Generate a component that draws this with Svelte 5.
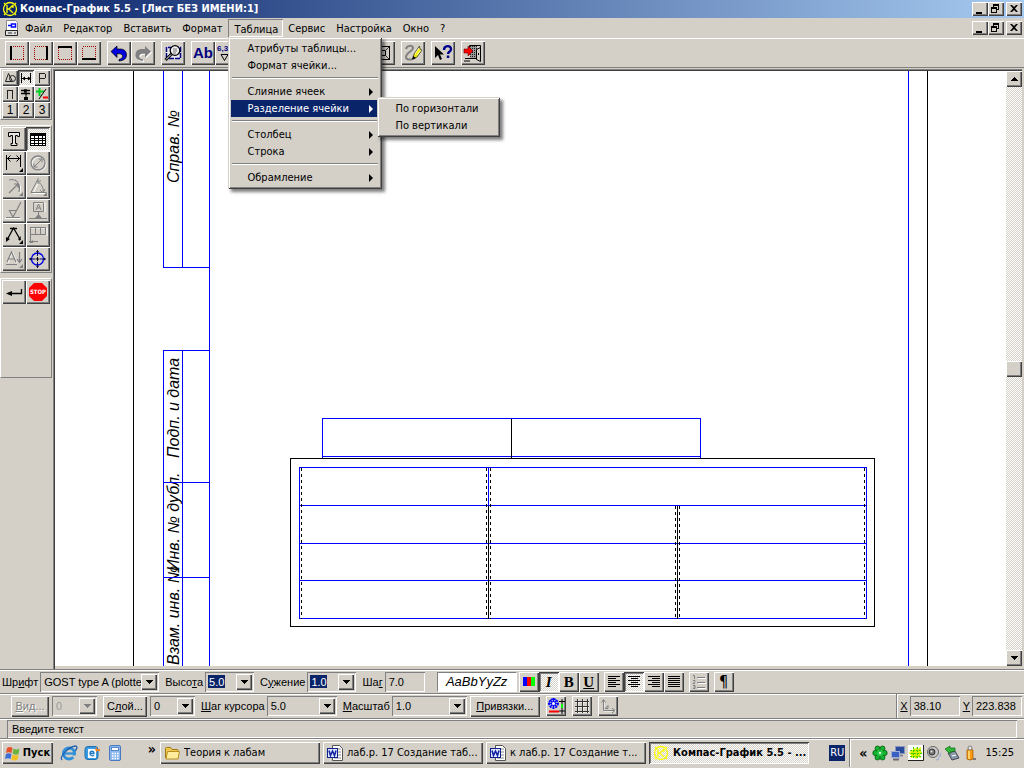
<script>
  const svg = (size, body) =>
    `<svg width="${size}" height="${size}" viewBox="0 0 ${size} ${size}" fill="none" stroke-width="1" aria-hidden="true">${body}</svg>`;

  const frame = (edge) =>
    `<rect x="5.5" y="5.5" width="13" height="13" stroke="#a00000" stroke-dasharray="1 1" shape-rendering="crispEdges"/><path d="${edge}" stroke="#000" stroke-width="2" shape-rendering="crispEdges"/>`;

  const icons = {
    edgeLeft: svg(24, frame('M6 5v14')),
    edgeRight: svg(24, frame('M18 5v14')),
    edgeTop: svg(24, frame('M5 6h14')),
    edgeBottom: svg(24, frame('M5 18h14')),
    undo: svg(24, `<path d="M4 10.500l6-5.500v3h3c4 0 6.500 2 6.500 6 0 3.500-2.500 5.500-7.500 6v-1.500c3-1 4-2 3.500-4-.4-1.500-2-2-5.500-1.800v3.800z" fill="#0000e0" stroke="#000" stroke-width=".7"/>`),
    redo: svg(24, `<path d="M21 11.500l-6-5.500v3h-3c-4 0-6.500 2-6.500 6 0 3.500 2.500 5.500 7.500 6v-1.500c-3-1-4-2-3.500-4 .4-1.500 2-2 5.500-1.800v3.800z" fill="#fff"/><path d="M20 10.500l-6-5.500v3h-3c-4 0-6.500 2-6.500 6 0 3.500 2.500 5.500 7.500 6v-1.500c-3-1-4-2-3.500-4 .4-1.500 2-2 5.500-1.800v3.800z" fill="#808080"/>`),
    magnify: svg(24, `<path d="M5 6h14v12H5z" fill="#e8e8e8"/><path d="M5.500 6v12M7 6.500h13M19.500 6v12M8 17.500h12" stroke="#00008b" stroke-dasharray="5 1" stroke-width="1.500"/><circle cx="14" cy="9.500" r="4.800" fill="#eee" stroke="#000" stroke-width="1.300"/><path d="M12 8h4M12 10h4M12 12h3" stroke="#777"/><path d="M10.500 13l-6 6" stroke="#000" stroke-width="3"/><path d="M10 13.500l-5 5" stroke="#fff" stroke-width="1"/>`),
    rough: svg(24, `<path d="M6 13.500h7l-3.500 6z" stroke="#000"/>`),
    grid: svg(24, `<path d="M5.500 5.500h13v13h-13zM5 10h14M5 14h14M10 5v14M14 5v14" stroke="#333"/>`),
    box3d: svg(24, `<rect x="5.500" y="5.500" width="13" height="13" stroke="#000"/><rect x="9.500" y="9.500" width="5" height="5" stroke="#000"/><path d="M6 6l4 4M18 6l-4 4M6 18l4-4M18 18l-4-4" stroke="#333"/>`),
    pencil: svg(24, `<path d="M5 8c1-4 7-4 7-1 0 3-7 5-7 9 0 3 4 3 6 2" stroke="#808080" stroke-width="2"/><path d="M12 18l1-5 5.500-8 .5 3 2 1-5 7z" fill="#f0f000" stroke="#333" stroke-width=".8"/><path d="M14 13l4-6M16 14l4-5" stroke="#fff" stroke-width=".7"/><path d="M11 19l1-4 3 2z" fill="#000"/>`),
    help: svg(24, `<path d="M4 5v12l3-3 2 5 2-1-2-4.500h4z" fill="#000"/><path d="M13 9c0-5 7-5 7-1 0 3-3 2.500-3 5" stroke="#00008b" stroke-width="2.400"/><path d="M15.800 14.500h2.500V17h-2.500z" fill="#00008b"/>`),
    door: svg(24, `<path d="M8.500 8V4.500h11v3" stroke="#000"/><path d="M9 5h7v13H9z" fill="#999"/><path d="M9.500 5v13M11.500 5v13M13.500 5v13M15.500 5v13" stroke="#222" stroke-dasharray="1 1"/><path d="M15.500 8.500l4-2v14l-4-2z" fill="#d4d0c8" stroke="#000"/><path d="M3 8h4V5l5 5-5 5v-3H3z" fill="#f00" stroke="#600" stroke-width=".6"/><path d="M4 17.500h11M3 20h6M17.500 12v2" stroke="#000"/>`),

    t16a: svg(16, `<path d="M3.500 11.500l3-8 4 8z" stroke="#222"/><circle cx="10.500" cy="8.500" r="3" stroke="#222"/>`),
    t16b: svg(16, `<path d="M3.500 3v10M12.500 3v10M4 8.500h9" stroke="#000" shape-rendering="crispEdges"/><path d="M4 8.500l3-2v4zM13 8.500l-3-2v4z" fill="#000"/>`),
    t16p: svg(16, `<path d="M5.500 13V3.500h4q2 0 2 2.500t-2 2.500h-4" stroke="#222" shape-rendering="crispEdges"/>`),
    t16n: svg(16, `<path d="M5.500 13V4.500h5V13" stroke="#222" shape-rendering="crispEdges"/>`),
    t16tap: svg(16, `<path d="M3 4.500h9M3 7.500h9M8 3v6" stroke="#000" stroke-width="1.300"/><path d="M6 3l3 2-3 2z" fill="#000"/><path d="M6 11h4v3H6z" fill="#000"/><path d="M8 9v3" stroke="#000"/>`),
    t16pm: svg(16, `<path d="M5.500 2v8M2 5.500h8" stroke="#00d020" stroke-width="2"/><path d="M12 3L5 13" stroke="#000"/><path d="M9 11.500h5" stroke="#f00" stroke-width="2"/>`),

    text: svg(24, `<path d="M6.500 5.500h11v4h-2v-1h-2v8h1.500v2h-6v-2H10.500v-8h-2v1h-2z" stroke="#000" fill="#e8e6e0"/>`),
    table: svg(24, `<rect x="4.500" y="6.500" width="15" height="12" fill="#fff" stroke="#000"/><path d="M4 7.500h16" stroke="#000" stroke-width="3"/><path d="M5 11.500h14M5 13.500h14M5 16.500h14M8.500 9v9M12.500 9v9M16.500 9v9" stroke="#000" shape-rendering="crispEdges"/>`),
    dim: svg(24, `<path d="M4.500 4v15M18.500 4v12M5 7.500h13" stroke="#000" shape-rendering="crispEdges"/><path d="M8.500 4.500l-3 3 3 3M14.500 4.500l3 3-3 3" stroke="#000"/><path d="M21 17v4h-4z" fill="#000"/>`),
    diam: svg(24, `<circle cx="13" cy="13" r="7" stroke="#fff"/><circle cx="12" cy="12" r="7" stroke="#808080" stroke-width="1.300"/><path d="M8 16l8-8M8 12.500V16h3.500M12.500 8H16v3.500" stroke="#808080"/>`),
    radius: svg(24, `<path d="M8 5c8-1 12 4 10 13" stroke="#fff"/><path d="M7 5c8-2 12 4 10 12M7 18l9-9M12 9h4v4" stroke="#808080" stroke-width="1.200"/><path d="M21 17v4h-4z" fill="#808080"/>`),
    angle: svg(24, `<path d="M13 6L7 18.500h13" stroke="#fff"/><path d="M12.500 3L5 17.500h15M11 6c4 2 7 7 6 12M12 9V6h3M14 15l3 3 2-4" stroke="#808080"/><path d="M21 17v4h-4z" fill="#808080"/>`),
    roughness: svg(24, `<path d="M3 19.500h16" stroke="#fff"/><path d="M4 18.500h14M7 11.500h7M7 11l4 7 8-15" stroke="#808080" stroke-width="1.200"/>`),
    base: svg(24, `<path d="M9 4h10v9" stroke="#fff"/><path d="M7.500 3.500h10v9h-10zM12.500 13v6M3 19.500h18" stroke="#808080"/><path d="M10 11l2.500-6 2.500 6M11 9h3" stroke="#808080"/><path d="M9 19l3.500-4 3.500 4z" fill="#808080"/>`),
    leader: svg(24, `<path d="M8 5.500h7M5 17l6.500-12 7 12" stroke="#000" stroke-width="1.300"/><path d="M4 19v-5l4 2zM18 18l-2-2 3-3z" fill="#000"/><path d="M21 17v4h-4z" fill="#000"/>`),
    tol: svg(24, `<path d="M5 5h16v8" stroke="#fff"/><path d="M4.500 4.500h15v7h-15zM9.500 5v6M14.500 5v6M4.500 12v7M3 18.500h9" stroke="#808080" shape-rendering="crispEdges"/><path d="M3 20l4-3v3z" fill="#808080"/>`),
    sort: svg(24, `<path d="M6 16l4.500-11L15 16" stroke="#fff"/><path d="M5 15L9.500 5 14 15M7 12h5M17.500 5v10M15 12l2.500 3.500L20 12M4 17.500h11" stroke="#808080" stroke-width="1.200"/><path d="M21 17v4h-4z" fill="#808080"/>`),
    target: svg(24, `<circle cx="11.500" cy="12" r="6" stroke="#0000e0" stroke-width="1.300"/><path d="M11.500 3v6M11.500 15v6M3 12h6M14 12h6" stroke="#000080"/><path d="M9.500 12h4M11.500 10v4" stroke="#000"/><path d="M10 4h3l-1.500 2zM10 20h3l-1.500-2zM4 10.500v3l2-1.500zM19 10.500v3l-2-1.500z" fill="#111"/>`),
    enter: svg(24, `<path d="M19.500 9v4.500H6" stroke="#000" stroke-width="1.300"/><path d="M4 13.500l6-2.500v5z" fill="#000"/>`),
    stop: svg(24, `<path d="M8 3h8l5 5v8l-5 5H8l-5-5V8z" fill="#f00"/><text x="12" y="14" font-family="DejaVu Sans Condensed, sans-serif" font-size="6" font-weight="bold" fill="#fff" text-anchor="middle">STOP</text>`),

    colors: svg(20, `<path d="M4 5h4v9H4z" fill="#00f"/><path d="M8 5h4v9H8z" fill="#f00"/><path d="M12 5h4v9h-4z" fill="#0f0"/>`),
    left: svg(20, `<path d="M4 4.500h12M4 6.500h8M4 8.500h12M4 10.500h8M4 12.500h12M4 14.500h8" stroke="#000"/>`),
    center: svg(20, `<path d="M4 4.500h12M7 6.500h7M4 8.500h12M7 10.500h7M4 12.500h12M7 14.500h7" stroke="#000"/>`),
    right: svg(20, `<path d="M4 4.500h12M8 6.500h8M4 8.500h12M8 10.500h8M4 12.500h12M8 14.500h8" stroke="#000"/>`),
    justify: svg(20, `<path d="M4 4.500h12M4 6.500h12M4 8.500h12M4 10.500h12M4 12.500h12M4 14.500h12" stroke="#000"/>`),
    list: svg(20, `<path d="M9 6.500h8M9 11.500h8M9 16.500h8" stroke="#fff"/><path d="M8 5.500h8M8 10.500h8M8 15.500h8" stroke="#808080"/><path d="M4 3.500h1.500V7M4 8.500h2v1l-2 2h2M4 13.500h2v3H4M4.500 15H6" stroke="#808080"/>`),
    snap: svg(20, `<path d="M7.500 2v11M2 7.500h11M4 4l7 7M11 4l-7 7" stroke="#00f" stroke-width="1.500"/><circle cx="7.500" cy="7.500" r="4.500" stroke="#00f" stroke-width="1.500" stroke-dasharray="2 1"/><circle cx="7.500" cy="7.500" r="1.500" fill="#fff"/><path d="M16 3v5M13 5.500h6M16 12v6M13 15h6" stroke="#000"/><path d="M16 8v4" stroke="#0f0" stroke-width="2"/><path d="M3 15.500h10" stroke="#f00" stroke-width="2"/>`),
    mesh: svg(20, `<path d="M6 3v14M11 3v14M16 3v14M3 6h14M3 11h14M3 16h14" stroke="#fff"/><path d="M5.500 3v14M10.500 3v14M15.500 3v14M3 5.500h14M3 10.500h14M3 15.500h14" stroke="#333"/>`),
    axes: svg(20, `<path d="M6 4v11h12" stroke="#fff"/><path d="M5.500 4v10.500H17M3.500 6.500l2-3 2 3M14 12l3 2.500-3 2.500M10 9.500l-3 3h3z" stroke="#808080"/>`),

    app: svg(16, `<circle cx="8" cy="8" r="6.500" stroke="#ff0" stroke-width="1.300"/><path d="M5 4v8M5 8h2l4-4M7 8l4 4M11 4v3M2 2l2 2M14 2l-2 2M2 14l2-2M14 14l-2-2" stroke="#ff0" stroke-width="1.300"/>`),
    doc: svg(16, `<path d="M2.500 .5h9l2 2v9h-11z" fill="#fff" stroke="#888"/><path d="M1.500 10.500h12v5h-12z" fill="#ddd" stroke="#222"/><path d="M4 5.500h3M7.500 4v3h4v-3z" stroke="#00f" stroke-width="1.500"/><path d="M4 13h4M10 13h2" stroke="#333"/>`),
    windows: svg(16, `<path d="M2 3q3-2 5.500 0L6.500 8q-3-1.500-5.500 0z" fill="#e8502a"/><path d="M8.500 3.500q3 1.800 6 0L13.500 9q-3 1.500-6-.5z" fill="#6cb33e"/><path d="M1 9q3-1.500 5.500 0l-1 5Q3 12.500 0 14z" fill="#3c6fd8"/><path d="M7.500 9.500q3 1.800 6 .2L12.500 14.500q-3 1.800-6 0z" fill="#f4c01e"/>`),
    ie: svg(18, `<circle cx="9" cy="9.500" r="5.500" stroke="#2f8fd8" stroke-width="3"/><path d="M5 9.500h9" stroke="#2f8fd8" stroke-width="2.200"/><path d="M11.500 11.500h5l-2 3z" fill="#d4d0c8"/><path d="M2 16C-1 13 9 2 16 2c2 1 0 4-1 5" stroke="#1b5fae" stroke-width="1.300"/>`),
    outlook: svg(18, `<rect x="2" y="2.500" width="13" height="13" rx="3" fill="#3a9be0" stroke="#1b6fb4"/><rect x="5" y="5" width="8" height="9" fill="#fff"/><path d="M7 9.500h4c0-3-4-3-4 0 0 2.500 3 3 4 1.500" stroke="#1f78c4" stroke-width="1.300"/><path d="M12 5l2-2v2h3v2h-3v2z" fill="#f08020"/>`),
    calc: svg(18, `<rect x="3.500" y="1.500" width="11" height="15" rx="1.500" fill="#8db8ee" stroke="#4a78c0"/><rect x="5.500" y="3.500" width="7" height="3" fill="#fff" stroke="#5a88cc"/><path d="M6 9.500h7M6 12h7M6 14.500h7" stroke="#fff" stroke-width="1.500" stroke-dasharray="1.500 1"/>`),
    folder: svg(16, `<path d="M1.500 3.500q0-1 1-1h4l1.500 2h5q1 0 1 1v8h-11q-1.500 0-1.500-1z" fill="#f0c850" stroke="#a07810"/><path d="M3.500 6.500h12l-1.500 7.500H2z" fill="#ffec9c" stroke="#b89020"/>`),
    word: svg(16, `<path d="M5.500 .5h7l3 3v12h-10z" fill="#fff" stroke="#555"/><path d="M11 4h3M11 7h3M11 10h3M7 13h7" stroke="#888"/><rect x=".5" y="3.500" width="10" height="9" fill="#dfe8ff" stroke="#10208c"/><path d="M2 5.500l1.500 5 2-4.500 2 4.500 1.500-5" stroke="#1020a0" stroke-width="1.500"/>`),
    clover: svg(16, `<g fill="#18b030" stroke="#006010" stroke-width=".8"><circle cx="5.500" cy="3.500" r="2.500"/><circle cx="10.500" cy="3.500" r="2.500"/><circle cx="3.500" cy="8" r="2.700"/><circle cx="12.500" cy="8" r="2.700"/><circle cx="5.500" cy="12.500" r="2.500"/><circle cx="10.500" cy="12.500" r="2.500"/></g><circle cx="8" cy="8" r="3.500" fill="#20c040"/><circle cx="8" cy="8" r="1.200" fill="#dfffd0"/>`),
    net: svg(16, `<rect x="5.500" y="1.500" width="9" height="7" fill="#2a4a9c" stroke="#8a98c0"/><path d="M8 10.500h5" stroke="#889" stroke-width="2"/><rect x="1.500" y="6.500" width="8" height="6" fill="#3a60c0" stroke="#a0b0d8"/><path d="M3 14.500h6" stroke="#667" stroke-width="2"/>`),
    splat: svg(16, `<path d="M0 0h15v15H0z" fill="#fff"/><path d="M0 15.500h15.500V0" stroke="#222"/><path d="M2 5h3V2l2 2 2-2 1 2 3-2v4l1 2-2 2 1 3-3-1-2 2-2-2-3 1v-3l-2-2 2-2z" fill="#d8f000"/><path d="M2 5.500h11M3 8.500h11M2 11.500h11M5.500 2v11M9.500 2v11" stroke="#40d000" stroke-dasharray="2 1"/>`),
    speaker: svg(16, `<circle cx="7" cy="7" r="5.500" fill="#c8c8c8" stroke="#666"/><circle cx="6" cy="7" r="3" fill="#777" stroke="#333"/><circle cx="5.500" cy="6.500" r="1" fill="#eee"/><path d="M12 13c2-1 2.500-3 2.500-5M10 15c1 0 2-.5 3-1" stroke="#8aa8e0"/>`),
    usb: svg(16, `<path d="M4 8l7-2 4 7-7 2z" fill="#8898a8" stroke="#445"/><path d="M1 4l5-3v2h5v3l-5 1v2z" fill="#30b838" stroke="#106818" stroke-width=".7"/><path d="M8 11l4-1" stroke="#fff"/>`),
    lamp: svg(16, `<path d="M5 5q3-2 6 0v9q-3 2-6 0z" fill="#f79a10" stroke="#a85800" stroke-width=".8"/><path d="M7 6v8" stroke="#ffe080" stroke-width="1.500"/><circle cx="8" cy="3" r="2" fill="#eee" stroke="#777"/><path d="M11 14h3" stroke="#777" stroke-width="2"/>`)
  };

  const toolGroups = [
    [['edgeLeft', 'Левая граница'], ['edgeRight', 'Правая граница'], ['edgeTop', 'Верхняя граница'], ['edgeBottom', 'Нижняя граница']],
    [['undo', 'Отменить'], ['redo', 'Повторить']],
    [['magnify', 'Просмотр']],
    [['ab', 'Текст'], ['rough', 'Шероховатость'], ['grid', 'Сетка']],
    [['grid', 'Таблица'], ['grid', 'Ячейка']],
    [['grid', 'Столбец'], ['grid', 'Строка'], ['box3d', 'Рамка']],
    [['pencil', 'Правка']],
    [['help', 'Справка']],
    [['door', 'Выход']]
  ];

  const modes = [['t16a', ''], ['t16b', ''], ['t16p', ''], ['t16n', ''], ['t16tap', ''], ['t16pm', ''], ['', '1'], ['', '2'], ['', '3']];
  const tools = ['text', 'table', 'dim', 'diam', 'radius', 'angle', 'roughness', 'base', 'leader', 'tol', 'sort', 'target'];

  const menus = ['Файл', 'Редактор', 'Вставить', 'Формат', 'Таблица', 'Сервис', 'Настройка', 'Окно', '?'];
  const tableMenu = [
    { label: 'Атрибуты таблицы...' },
    { label: 'Формат ячейки...' },
    null,
    { label: 'Слияние ячеек', more: true },
    { label: 'Разделение ячейки', more: true, sub: ['По горизонтали', 'По вертикали'] },
    null,
    { label: 'Столбец', more: true },
    { label: 'Строка', more: true },
    null,
    { label: 'Обрамление', more: true }
  ];

  const tasks = [
    { icon: 'folder', label: 'Теория к лабам' },
    { icon: 'word', label: 'лаб.р. 17 Создание таб...' },
    { icon: 'word', label: 'к лаб.р. 17 Создание т...' },
    { icon: 'app', label: 'Компас-График 5.5 - ...', active: true }
  ];
  const tray = ['clover', 'net', 'splat', 'speaker', 'usb', 'lamp'];

  let openMenu = $state('Таблица');
  let openSub = $state('Разделение ячейки');
</script>

{#snippet winButtons()}
  <span class="winbtns">
    <button class="bevel" aria-label="Свернуть"><svg width="16" height="14" shape-rendering="crispEdges"><path d="M4 10h6v2H4z" /></svg></button>
    <button class="bevel" aria-label="Восстановить"><svg width="16" height="14" shape-rendering="crispEdges"><path d="M5 2h6v6H9V7h1V4H6v1H5zM3 5h6v6H3zM4 7v3h4V7z" fill-rule="evenodd" /></svg></button>
    <button class="bevel close" aria-label="Закрыть"><svg width="16" height="14"><path d="M4 3h2l2 2 2-2h2L9 6.500l3 3.500h-2L8 8l-2 2H4l3-3.500z" /></svg></button>
  </span>
{/snippet}

{#snippet arrow(dir)}
  <svg class="arrow" width="8" height="4" viewBox="0 0 8 4" shape-rendering="crispEdges" aria-hidden="true"><path d={dir === 'up' ? 'M0 4l4-4 4 4z' : 'M0 0h8L4 4z'} /></svg>
{/snippet}

<div class="window">
  <header class="title">
    {@html icons.app}
    <h1>Компас-График 5.5 - [Лист БЕЗ ИМЕНИ:1]</h1>
    {@render winButtons()}
  </header>

  <nav class="menubar">
    <span class="docicon">{@html icons.doc}</span>
    {#each menus as m}
      <div class="menuwrap">
        <button class="menu" class:open={m === openMenu} onclick={() => (openMenu = openMenu === m ? '' : m)}>{m}</button>
        {#if m === 'Таблица' && openMenu === m}
          <div class="popup" role="menu">
            {#each tableMenu as it}
              {#if it}
                <div class="itemwrap">
                  <button class="item" class:hot={it.label === openSub} role="menuitem" onmouseenter={() => (openSub = it.label)}>
                    {it.label}
                    {#if it.more}<svg width="5" height="8" viewBox="0 0 5 8" aria-hidden="true"><path d="M0 0l4 4-4 4z" fill="currentColor" /></svg>{/if}
                  </button>
                  {#if it.sub && it.label === openSub}
                    <div class="popup sub" role="menu">
                      {#each it.sub as s}<button class="item" role="menuitem">{s}</button>{/each}
                    </div>
                  {/if}
                </div>
              {:else}
                <hr />
              {/if}
            {/each}
          </div>
        {/if}
      </div>
    {/each}
    {@render winButtons()}
  </nav>

  <div class="toolbar">
    {#each toolGroups as g}
      <div class="group">
        {#each g as [name, title]}
          <button class="bevel tool" aria-label={title}>
            {#if name === 'ab'}<span class="ab">Ab</span>{:else}{@html icons[name]}{/if}
            {#if name === 'rough'}<span class="r63">6,3</span>{/if}
          </button>
        {/each}
      </div>
    {/each}
  </div>

  <main>
    <aside>
      <div class="panel modes">
        {#each modes as [icon, n], i}
          <button class="bevel small" class:down={i === 1} aria-label={n || 'Режим ' + (i + 1)}>{#if icon}{@html icons[icon]}{:else}{n}{/if}</button>
        {/each}
      </div>
      <div class="panel tools">
        {#each tools as t}
          <button class="bevel tool" class:down={t === 'table'} aria-label={t}>{@html icons[t]}</button>
        {/each}
      </div>
      <div class="panel tools last">
        <button class="bevel tool" aria-label="Ввод">{@html icons.enter}</button>
        <button class="bevel tool" aria-label="Стоп">{@html icons.stop}</button>
      </div>
    </aside>

    <div class="view">
      <svg class="sheet" fill="none" shape-rendering="crispEdges" role="img" aria-label="Чертёж">
        <g transform="translate(-55 -71)">
          <g font-family="'Liberation Sans', Arial, sans-serif" font-style="italic" font-size="16" fill="#000">
            <text transform="translate(179 183) rotate(-90)">Справ. №</text>
            <text transform="translate(179 458) rotate(-90)">Подп. и дата</text>
            <text transform="translate(179 571) rotate(-90)">Инв. № дубл.</text>
            <text transform="translate(179 665) rotate(-90)">Взам. инв. №</text>
          </g>
          <g transform="translate(.5 .5)">
            <path stroke="#00f" d="M163 70V267H209M182 70V267M209 70V3000M163 3000V350H209M182 350V3000M163 482H209M163 577H209M908 70V3000" />
            <path stroke="#000" d="M133 70V3000M927 70V3000" />
            <path stroke="#00f" d="M322 458V418H700V458M322 456H700M299 467H866V618H299zM299 505H866M299 543H866M299 580H866M488 467V505" />
            <path stroke="#000" d="M511 418V458M290 458H874V626H290zM488 505V618M677 505V618" />
            <path stroke="#000" stroke-dasharray="3 3" d="M301 467V618M486 467V618M490 467V618M864 467V618M675 505V618M679 505V618" />
          </g>
        </g>
      </svg>
      <div class="scroll">
        <button class="bevel sbtn" aria-label="Вверх">{@render arrow('up')}</button>
        <div class="track"><div class="bevel thumb"></div></div>
        <button class="bevel sbtn" aria-label="Вниз">{@render arrow('down')}</button>
      </div>
    </div>
  </main>

  <div class="bar format">
    <label for="font">Шр<u>и</u>фт</label>
    <span class="combo w-font"><select id="font"><option>GOST type A (plotter</option></select><i class="bevel">{@render arrow('down')}</i></span>
    <label class="gap" for="height">Высо<u>т</u>а</label>
    <span class="combo w-num"><input class="marked" id="height" value="5.0" /><button class="bevel" aria-label="Список высот">{@render arrow('down')}</button></span>
    <label class="gap" for="narrow">С<u>у</u>жение</label>
    <span class="combo w-num"><input class="marked" id="narrow" value="1.0" /><button class="bevel" aria-label="Список сужений">{@render arrow('down')}</button></span>
    <label class="gap" for="step">Ша<u>г</u></label>
    <span class="combo w-step"><input id="step" value="7.0" /></span>
    <output class="sample">AaBbYyZz</output>
    <div class="group">
      <button class="bevel mid" aria-label="Цвет">{@html icons.colors}</button>
      <button class="bevel mid serif down"><em>I</em></button>
      <button class="bevel mid serif">B</button>
      <button class="bevel mid serif"><u>U</u></button>
    </div>
    <div class="group">
      <button class="bevel mid" aria-label="По левому краю">{@html icons.left}</button>
      <button class="bevel mid down" aria-label="По центру">{@html icons.center}</button>
      <button class="bevel mid" aria-label="По правому краю">{@html icons.right}</button>
      <button class="bevel mid" aria-label="По ширине">{@html icons.justify}</button>
    </div>
    <div class="group"><button class="bevel mid" aria-label="Нумерация">{@html icons.list}</button></div>
    <div class="group"><button class="bevel mid pil">¶</button></div>
  </div>

  <div class="bar state">
    <button class="bevel txt off first" disabled><u>В</u>ид...</button>
    <span class="combo w-lay off"><select disabled aria-label="Вид"><option>0</option></select><i class="bevel">{@render arrow('down')}</i></span>
    <button class="bevel txt second">С<u>л</u>ой...</button>
    <span class="combo w-lay"><select aria-label="Слой"><option>0</option></select><i class="bevel">{@render arrow('down')}</i></span>
    <label class="gap" for="cursor"><u>Ш</u>аг курсора</label>
    <span class="combo w-cur"><select id="cursor"><option>5.0</option></select><i class="bevel">{@render arrow('down')}</i></span>
    <label class="gap" for="scale"><u>М</u>асштаб</label>
    <span class="combo w-scale"><select id="scale"><option>1.0</option></select><i class="bevel">{@render arrow('down')}</i></span>
    <button class="bevel txt third"><u>П</u>ривязки...</button>
    <div class="spaced">
      <button class="bevel mid" aria-label="Привязка">{@html icons.snap}</button>
      <button class="bevel mid" aria-label="Сетка">{@html icons.mesh}</button>
      <button class="bevel mid" aria-label="Система координат">{@html icons.axes}</button>
    </div>
    <div class="coords">
      <label for="cx"><u>X</u></label><span class="combo w-xy"><input id="cx" value="38.10" /></span>
      <label for="cy"><u>Y</u></label><span class="combo w-xy"><input id="cy" value="223.838" /></span>
    </div>
  </div>

  <div class="bar status"><p>Введите текст</p></div>

  <footer>
    <button class="bevel start">{@html icons.windows}Пуск</button>
    <div class="quick">
      <button aria-label="Internet Explorer">{@html icons.ie}</button>
      <button aria-label="Outlook Express">{@html icons.outlook}</button>
      <button aria-label="Калькулятор">{@html icons.calc}</button>
      <b>»</b>
    </div>
    <div class="tasks">
      {#each tasks as t}
        <button class="bevel task" class:down={t.active}>{@html icons[t.icon]}<span>{t.label}</span></button>
      {/each}
    </div>
    <span class="lang">RU</span>
    <div class="tray">
      <b>«</b>
      {#each tray as t}{@html icons[t]}{/each}
      <time>15:25</time>
    </div>
  </footer>
</div>

<style>
  :global(body) { margin: 0; background: #d4d0c8; }
  :global(svg) { display: block; flex: none; }
  .window {
    --face: #d4d0c8;
    --ui: 'DejaVu Sans Condensed', 'DejaVu Sans', Tahoma, sans-serif;
    --old: 'Liberation Sans', Arial, sans-serif;
    --dither: repeating-conic-gradient(#fff 0 25%, #d4d0c8 0 50%) 0 0 / 2px 2px;
    display: flex; flex-direction: column; min-height: 100vh; background: var(--face);
    font: 11px/14px var(--ui); color: #000; cursor: default;
  }
  .window *, .window { box-sizing: border-box; }
  button, select, input { font: inherit; color: inherit; margin: 0; padding: 0; border: 0; background: none; border-radius: 0; outline: 0; }
  .bevel {
    background: var(--face); display: flex; align-items: center; justify-content: center; flex: none;
    box-shadow: inset 1px 1px #fff, inset -1px -1px #404040, inset -2px -2px #808080;
  }
  .bevel.down { background: var(--dither); box-shadow: inset 1px 1px #404040, inset -1px -1px #fff, inset 2px 2px #808080; }

  .title { display: flex; align-items: center; height: 18px; padding: 0 2px; gap: 2px; background: linear-gradient(90deg, #0a246a, #a6caf0); color: #fff; }
  h1 { margin: 0; font: bold 11px/16px var(--ui); white-space: nowrap; }
  .winbtns { display: flex; margin-left: auto; color: #000; }
  .winbtns button { width: 16px; height: 14px; }
  .winbtns .close { margin-left: 2px; }

  .menubar { display: flex; align-items: center; height: 20px; padding: 0 2px 0 4px; }
  .docicon { width: 16px; }
  .menuwrap { position: relative; }
  .menu { display: block; height: 18px; padding: 1px 6px 0 5px; line-height: 18px; }
  .menu.open { box-shadow: inset 1px 1px #808080, inset -1px -1px #fff; padding: 2px 5px 0 6px; }
  .popup {
    position: absolute; z-index: 5; left: 0; top: 18px; width: 154px; padding: 3px;
    background: var(--face); box-shadow: inset 1px 1px var(--face), inset -1px -1px #404040, inset 2px 2px #fff, inset -2px -2px #808080, 3px 3px 3px rgba(0, 0, 0, .5);
  }
  .popup.sub { left: 146px; top: -3px; width: 123px; }
  .itemwrap { position: relative; }
  .item { display: flex; align-items: center; justify-content: space-between; width: 100%; height: 17px; padding: 0 5px 0 16px; white-space: nowrap; text-align: left; }
  .sub .item { padding-left: 15px; }
  .item.hot { background: #0a246a; color: #fff; }
  hr { height: 2px; margin: 3px 1px 4px; border: 0; border-top: 1px solid #808080; border-bottom: 1px solid #fff; }

  .toolbar { display: flex; gap: 6px; padding: 2px 5px; border-top: 1px solid #fff; border-bottom: 1px solid #808080; }
  .group { display: flex; }
  .tool { position: relative; width: 24px; height: 24px; }
  .ab { font: bold 15px/24px var(--old); color: #000080; }
  .r63 { position: absolute; left: 2px; top: 3px; font: bold 8px/9px var(--old); color: #000080; }

  main { flex: 1; display: flex; min-height: 0; }
  aside { width: 52px; display: flex; flex-direction: column; gap: 5px; }
  .panel { display: grid; padding: 1px; border: 1px solid #fff; border-right-color: #808080; border-bottom-color: #808080; }
  .modes { grid-template-columns: repeat(3, 16px); }
  .tools { grid-template-columns: repeat(2, 24px); }
  .last { align-content: start; min-height: 100px; }
  .small { width: 16px; height: 16px; font: 12px/16px var(--old); }
  .view { flex: 1; display: flex; min-width: 0; margin: 1px 2px 0 1px; border: solid #808080; border-width: 1px 0 0 1px; box-shadow: inset 1px 1px #404040; padding: 1px 0 3px 1px; }
  .sheet { flex: 1 1 0; width: 0; height: auto; background: #fff; }
  .scroll { display: flex; flex-direction: column; width: 16px; }
  .sbtn { height: 16px; }
  .track { flex: 1; background: var(--dither); display: flex; flex-direction: column; justify-content: center; }
  .thumb { height: 16px; }

  .bar { display: flex; align-items: center; border-top: 1px solid #808080; box-shadow: inset 0 1px #fff; font: 11px/14px var(--old); }
  label { white-space: nowrap; margin: 0 2px; }
  .gap { margin-left: 6px; }
  .format { height: 24px; }
  .state { height: 25px; }
  .combo { display: flex; align-items: center; width: 50px; height: 20px; flex: none; position: relative; box-shadow: inset 1px 1px #808080, inset -1px -1px #fff; padding: 2px; }
  .combo select, .combo input { flex: 1; min-width: 0; width: 0; height: 16px; padding-left: 2px; appearance: none; }
  .combo .bevel { width: 16px; height: 16px; }
  .combo i { pointer-events: none; }
  .combo .marked { color: #fff; background: linear-gradient(#0a246a, #0a246a) 1px 1px / 17px 13px no-repeat; }
  .w-font { width: 119px; }
  .w-num { width: 49px; }
  .w-step { width: 40px; }
  .w-lay { width: 45px; }
  .w-cur { width: 70px; }
  .w-scale { width: 75px; }
  .sample { width: 80px; height: 20px; margin: 0 2px 0 12px; background: #fff; border: 1px solid #808080; border-right-color: #fff; border-bottom-color: #fff; font: italic 13px/18px var(--old); text-align: center; }
  .mid { width: 20px; height: 20px; }
  .format .group { margin-right: 5px; }
  .serif { font: bold 15px/18px 'Liberation Serif', serif; }
  .pil { font: 16px/18px var(--ui); }
  .txt { height: 21px; margin-right: 3px; }
  .first { width: 38px; margin-left: 11px; }
  .second { width: 44px; margin-left: 6px; }
  .third { width: 70px; margin: 0 6px 0 3px; }
  .spaced { display: flex; gap: 6px; }
  .off { color: #808080; text-shadow: 1px 1px #fff; }
  .off .arrow { fill: #808080; }
  .coords { display: flex; align-items: center; align-self: stretch; margin-left: auto; padding-right: 2px; border-left: 1px solid #808080; box-shadow: inset 1px 0 #fff; }
  .w-xy { width: 50px; }
  .coords label { margin: 0 2px 0 3px; }
  .status { height: 20px; padding: 0 7px; }
  .status p { flex: 1; margin: 0; padding: 1px 5px; line-height: 16px; box-shadow: inset 1px 1px #808080, inset -1px -1px #fff; }

  footer { display: flex; align-items: center; height: 30px; padding: 0 2px 1px; border-top: 1px solid #808080; box-shadow: inset 0 1px #fff; }
  .start { width: 51px; height: 22px; gap: 2px; font-weight: bold; }
  .quick { display: flex; align-items: center; gap: 5px; width: 107px; padding-left: 7px; }
  .quick b { margin: -8px 4px 0 auto; font-size: 14px; }
  .tasks { flex: 1; display: flex; gap: 3px; min-width: 0; }
  .task { flex: 0 1 160px; min-width: 0; height: 22px; justify-content: flex-start; gap: 4px; padding: 0 2px 0 4px; }
  .task span { overflow: hidden; text-overflow: ellipsis; white-space: nowrap; }
  .task.down { font-weight: bold; }
  .lang { padding: 1px; background: #0a246a; color: #fff; margin-right: 4px; }
  .tray { display: flex; align-items: center; gap: 2px; align-self: stretch; padding: 0 8px 0 9px; border-left: 1px solid #808080; box-shadow: inset 1px 0 #fff; }
  .tray b { font-size: 14px; margin-right: 3px; }
  .tray time { margin-left: 5px; }
</style>
